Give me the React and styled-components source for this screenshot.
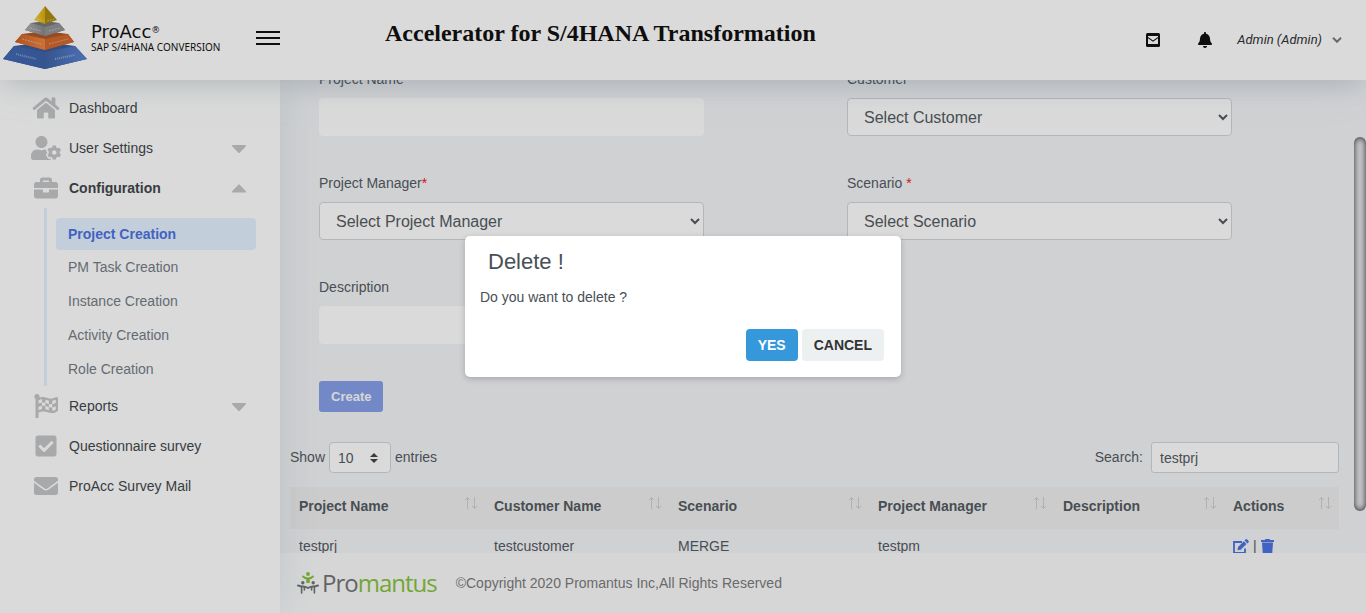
import React, { useLayoutEffect, useRef } from "react";
import styled, { createGlobalStyle, css } from "styled-components";
import {
  FaHome,
  FaUserCog,
  FaBriefcase,
  FaFlagCheckered,
  FaCheckSquare,
  FaEnvelope,
  FaCaretDown,
  FaCaretUp,
  FaBell,
} from "react-icons/fa";

const sans = '"Liberation Sans", Arial, sans-serif';

const GlobalStyle = createGlobalStyle`
  *, *::before, *::after { box-sizing: border-box; }
  body {
    margin: 0;
    font: 14px/21px ${sans};
    color: #495057;
    background: #f3f4f7;
  }
  button, input, select { font-family: inherit; }
`;

const Page = styled.div`
  position: relative;
  display: grid;
  grid-template: 80px minmax(0, 1fr) / 280px minmax(0, 1fr);
  height: 100vh;
  overflow: hidden;
`;

/* ---------- header ---------- */

const Header = styled.header`
  grid-column: 1 / -1;
  position: relative;
  z-index: 3;
  display: flex;
  align-items: center;
  padding-right: 24px;
  background: #fff;
  box-shadow: 0 8px 24px -4px rgba(40, 46, 70, 0.16), 0 0 48px rgba(120, 180, 180, 0.15);
`;

const HeaderStart = styled.div`
  display: flex;
  align-items: center;
  padding-bottom: 4px;
`;

const Brand = styled.a`
  display: flex;
  align-items: center;
  width: 256px;
  padding-left: 2px;
  gap: 3px;
  color: #000;
  text-decoration: none;
`;

const BrandText = styled.span`
  display: grid;
  font: 10px/12px "Noto Sans", sans-serif;
  white-space: nowrap;
`;

const BrandName = styled.span`
  font: 18px/18px "DejaVu Sans", sans-serif;

  sup {
    font-size: 9px;
    line-height: 0;
    vertical-align: 5px;
  }
`;

const MenuButton = styled.button`
  display: grid;
  gap: 4px;
  width: 24px;
  padding: 0;
  border: 0;
  background: none;

  span {
    height: 2px;
    background: #000;
  }
`;

const Title = styled.h1`
  margin: 0 auto 14px 105px;
  font: bold 24px/28px "Liberation Serif", "Times New Roman", serif;
  color: #000;
`;

const HeaderTools = styled.div`
  display: flex;
  align-items: center;
`;

const IconButton = styled.button`
  display: flex;
  margin-right: ${(p) => p.$after || 0}px;
  padding: 0;
  border: 0;
  background: none;
  color: #000;
`;

const UserButton = styled.button`
  display: flex;
  align-items: center;
  gap: 10px;
  padding: 0;
  border: 0;
  background: none;
  font: italic 13px/20px Roboto, sans-serif;
  color: #212529;
`;

/* ---------- sidebar ---------- */

const Sidebar = styled.nav`
  position: relative;
  z-index: 2;
  padding: 8px 24px 0 31px;
  background: #fff;
  box-shadow: 0 0 40px rgba(70, 110, 120, 0.14);
`;

const NavLink = styled.a`
  display: grid;
  grid-template-columns: 30px 1fr 16px;
  align-items: center;
  column-gap: 8px;
  height: 40px;
  padding-right: 9px;
  color: #343a40;
  text-decoration: none;
  font-weight: ${(p) => (p.$open ? "bold" : "normal")};

  svg {
    width: 100%;
    height: 24px;
    color: #c1c2c5;
  }
`;

const SubMenu = styled.ul`
  margin: 0 0 0 13px;
  padding: 10px 0 0 9px;
  list-style: none;
  border-left: 3px solid #e1f2ff;
`;

const SubLink = styled.a`
  display: flex;
  align-items: center;
  height: 34px;
  padding: 0 12px;
  border-radius: 4px;
  color: #6c757d;
  text-decoration: none;
  ${(p) =>
    p.$active &&
    css`
      height: 32px;
      background: #e1f2ff;
      color: #4169e1;
      font-weight: bold;
    `}
`;

/* ---------- main ---------- */

const Main = styled.main`
  display: flex;
  flex-direction: column;
  min-height: 0;
`;

const Scroller = styled.div`
  flex: 1;
  min-height: 0;
  overflow-y: auto;
  scrollbar-width: none;
  padding: 40px 27px 40px 10px;
`;

const Form = styled.form`
  display: grid;
  grid-template-columns: 1fr 1fr;
  gap: 37px 143px;
  margin: 0 107px 30px 29px;
`;

const Field = styled.div`
  display: grid;
  gap: 8px;

  em {
    color: #f00;
    font-style: normal;
  }
`;

const control = css`
  width: 100%;
  height: 38px;
  padding: 6px 12px;
  border-radius: 4px;
  background-color: #fff;
  color: #495057;
  font-size: 16px;
`;

const TextBox = styled.input`
  ${control}
  border: 1px solid #fff;
`;

const Select = styled.select`
  ${control}
  border: 1px solid #ced4da;
`;

const CreateButton = styled.button`
  justify-self: start;
  height: 31px;
  padding: 0 12px;
  border: 0;
  border-radius: 3px;
  background: #4169e1;
  color: #fff;
  font-size: 13px;
  font-weight: bold;
  opacity: 0.65;
`;

const TableBar = styled.div`
  display: flex;
  justify-content: space-between;
  align-items: center;
  margin-bottom: 14px;

  label {
    display: flex;
    align-items: center;
  }
`;

const PageSize = styled.span`
  position: relative;
  display: flex;
  margin: 0 4px;

  select {
    appearance: none;
    width: 62px;
    height: 31px;
    padding: 0 8px;
    border: 1px solid #ced4da;
    border-radius: 4px;
    background: #fff;
    color: #495057;
    font-size: 14px;
  }

  svg {
    position: absolute;
    top: 10px;
    right: 13px;
    pointer-events: none;
  }
`;

const SearchBox = styled.input`
  width: 188px;
  height: 31px;
  margin-left: 8px;
  padding: 0 8px;
  border: 1px solid #ced4da;
  border-radius: 3px;
  background: #fff;
  color: #495057;
  font-size: 14px;
`;

const Table = styled.table`
  width: 100%;
  table-layout: fixed;
  border-collapse: collapse;

  th,
  td {
    padding: 7px 8px 9px 9px;
    text-align: left;
  }

  th {
    height: 41px;
    background: #eee;
    border-bottom: 2px solid #ebedf2;
  }

  td {
    height: 37px;
  }
`;

const HeadCell = styled.div`
  display: flex;
  justify-content: space-between;

  svg {
    flex: none;
  }
`;

const Actions = styled.div`
  display: flex;
  align-items: center;
  gap: 4px;

  a {
    display: flex;
    color: #4169e1;
  }
`;

const Footer = styled.footer`
  display: flex;
  align-items: center;
  flex: none;
  gap: 19px;
  height: 60px;
  padding: 0 17px;
  background: #fafbfc;
  color: #737373;
`;

const Promantus = styled.a`
  display: flex;
  align-items: center;
  gap: 3px;
  color: #6a6c6f;
  text-decoration: none;
  font: 24px/30px "Open Sans", sans-serif;
  letter-spacing: -1px;

  b {
    color: #7fbf2f;
    font-weight: 400;
  }
`;

const ScrollThumb = styled.div`
  position: absolute;
  z-index: 4;
  right: 0;
  top: 137px;
  width: 12px;
  height: 61%;
  border-radius: 6px;
  background: #e9eaec;
  box-shadow: inset 0 0 6px rgba(0, 0, 0, 0.9);
`;

/* ---------- dialog ---------- */

const Backdrop = styled.div`
  position: absolute;
  inset: 0;
  z-index: 5;
  display: flex;
  align-items: center;
  justify-content: center;
  background: rgba(68, 68, 68, 0.2);
`;

const Dialog = styled.section`
  width: 436px;
  max-width: 90%;
  padding: 11px 17px 16px 15px;
  border-radius: 5px;
  background: #fff;
  box-shadow: 0 2px 6px rgba(0, 0, 0, 0.2);

  h2 {
    margin: 0 8px 10px;
    font-size: 22px;
    line-height: 30px;
    font-weight: normal;
  }

  p {
    margin: 0 0 21px;
  }
`;

const DialogButtons = styled.div`
  display: flex;
  justify-content: flex-end;
  gap: 4px;
`;

const DialogButton = styled.button`
  height: 32px;
  padding: 0 12px;
  border: 0;
  border-radius: 4px;
  background: ${(p) => (p.$primary ? "#3498db" : "#ecf0f1")};
  color: ${(p) => (p.$primary ? "#fff" : "#333")};
  font-size: 14px;
  font-weight: bold;
  text-transform: uppercase;
`;

/* ---------- drawings ---------- */

const PyramidLogo = () => (
  <svg width="86" height="64" viewBox="0 0 86 64" aria-hidden="true">
    <defs>
      <linearGradient id="gold"><stop offset="0" stopColor="#f3cb2a" /><stop offset="1" stopColor="#d9a800" /></linearGradient>
      <linearGradient id="grayFace"><stop offset="0" stopColor="#a9a9aa" /><stop offset="1" stopColor="#7f8082" /></linearGradient>
      <linearGradient id="orange"><stop offset="0" stopColor="#c9561a" /><stop offset="1" stopColor="#ee7d36" /></linearGradient>
      <linearGradient id="blue"><stop offset="0" stopColor="#3560b0" /><stop offset="1" stopColor="#3058a3" /></linearGradient>
      <linearGradient id="blueSide"><stop offset="0" stopColor="#34599f" /><stop offset="1" stopColor="#4d7bd0" /></linearGradient>
    </defs>
    <path d="M12 40l31-4 30 4 12 13-42 10L1 53z" fill="#2f5091" />
    <path d="M12 40l31 6v17L1 53z" fill="url(#blue)" />
    <path d="M73 40l-30 6v17l42-10z" fill="url(#blueSide)" />
    <path d="M20 28l23-3 23 3 6 8-29 8-30-8z" fill="#a94d17" />
    <path d="M20 28l23 5v11l-30-8z" fill="url(#orange)" />
    <path d="M66 28l-23 5v11l29-8z" fill="#cf5f20" />
    <path d="M29 17l14-2 14 2 6 7-20 6-20-6z" fill="#6d6e70" />
    <path d="M29 17l14 4v9l-20-6z" fill="url(#grayFace)" />
    <path d="M57 17l-14 4v9l20-6z" fill="#8b8c8e" />
    <path d="M43 0L32 14l11 4z" fill="url(#gold)" />
    <path d="M43 0l12 14-12 4z" fill="#a98300" />
    <path d="M35 13l7 2M45 15l7-2M28 22l11 3M47 25l11-3M20 33l19 5M47 38l19-5" stroke="#fff" strokeOpacity=".4" strokeDasharray="2 1" />
    <path d="M14 48l20 5M53 53l20-4" stroke="#fff" strokeOpacity=".4" strokeWidth="2" strokeDasharray="1 1" />
  </svg>
);

const MailBox = () => (
  <svg width="14" height="14" viewBox="0 0 14 14" aria-hidden="true">
    <rect width="14" height="14" rx="1.5" fill="#000" />
    <path d="M2 3h10v1L7 7.6 2 4z" fill="#fff" />
    <path d="M2 5.2l5 3.6 5-3.6V11H2z" fill="#fff" />
  </svg>
);

const Chevron = () => (
  <svg width="10" height="6" viewBox="0 0 10 6" fill="none" stroke="#6c757d" strokeWidth="2" aria-hidden="true">
    <path d="M1 .8l4 4 4-4" />
  </svg>
);

const UpDown = () => (
  <svg width="8" height="12" viewBox="0 0 8 12" fill="#343a40" aria-hidden="true">
    <path d="M4 1l4 4H0zM4 11L0 7h8z" />
  </svg>
);

const SortArrows = () => (
  <svg width="13" height="14" viewBox="0 0 13 14" fill="none" stroke="#cbccce" aria-hidden="true">
    <path d="M3.5 13V1.5M1 4l2.5-2.5L6 4M10.5 1v11.5M8 10l2.5 2.5L13 10" />
  </svg>
);

const Edit = () => (
  <svg width="16" height="15" viewBox="0 0 16 15" fill="none" aria-hidden="true">
    <path d="M9 3H1v11h11V9.500" stroke="currentColor" strokeWidth="1.800" />
    <path d="M4.500 11.200l.5-3.200 5.800-5.800 2.700 2.700L7.700 10.700zM11.500 1.500l1-1a1.200 1.200 0 0 1 1.700 0l1.200 1.200a1.200 1.200 0 0 1 0 1.700l-1 1z" fill="currentColor" />
  </svg>
);

const Trash = () => (
  <svg width="13" height="15" viewBox="0 0 13 15" fill="currentColor" aria-hidden="true">
    <path d="M4.500 0h4l.8 1H13v2H0V1h3.700zM1 3.400h11l-.7 10.200a1.500 1.500 0 0 1-1.500 1.400H3.200a1.500 1.500 0 0 1-1.500-1.400z" />
  </svg>
);

const People = () => (
  <svg width="22" height="22" viewBox="0 0 22 22" fill="none" strokeLinecap="round" aria-hidden="true">
    <g stroke="#7fbf2f">
      <path d="M6 4.500q2 2 5 2t5-2" strokeWidth="1.800" />
      <path d="M11 7v4" strokeWidth="3.500" strokeLinecap="butt" />
      <circle cx="11" cy="2" r="1.900" fill="#7fbf2f" stroke="none" />
    </g>
    <g stroke="#6a6c6f">
      <path d="M1 13.500q2.500 1 5 1t5 1.500q2.500-1.500 5-1.500t5-1" strokeWidth="2" />
      <path d="M4.600 15v6M7.400 15v3M14.600 15v3M17.400 15v6" strokeWidth="1.600" />
      <circle cx="5.800" cy="10.800" r="1.700" fill="#6a6c6f" stroke="none" />
      <circle cx="16.200" cy="10.800" r="1.700" fill="#6a6c6f" stroke="none" />
    </g>
  </svg>
);

const columns = [
  ["Project Name", 195],
  ["Customer Name", 184],
  ["Scenario", 200],
  ["Project Manager", 185],
  ["Description", 170],
  ["Actions", 115],
];
const totalWidth = columns.reduce((sum, c) => sum + c[1], 0);

export default function App() {
  const scroller = useRef(null);

  useLayoutEffect(() => {
    scroller.current.scrollTop = 51;
  }, []);

  return (
    <>
      <GlobalStyle />
      <Page>
        <Header>
          <HeaderStart>
            <Brand href="#">
              <PyramidLogo />
              <BrandText>
                <BrandName>ProAcc<sup>®</sup></BrandName>
                SAP S/4HANA CONVERSION
              </BrandText>
            </Brand>
            <MenuButton type="button" aria-label="Toggle menu"><span /><span /><span /></MenuButton>
          </HeaderStart>
          <Title>Accelerator for S/4HANA Transformation</Title>
          <HeaderTools>
            <IconButton type="button" aria-label="Messages" $after={37}><MailBox /></IconButton>
            <IconButton type="button" aria-label="Notifications" $after={24}><FaBell size={16} /></IconButton>
            <UserButton type="button">Admin (Admin) <Chevron /></UserButton>
          </HeaderTools>
        </Header>

        <Sidebar>
          <NavLink href="#"><FaHome />Dashboard</NavLink>
          <NavLink href="#"><FaUserCog />User Settings<FaCaretDown /></NavLink>
          <NavLink href="#" $open><FaBriefcase />Configuration<FaCaretUp /></NavLink>
          <SubMenu>
            <li><SubLink href="#" $active>Project Creation</SubLink></li>
            <li><SubLink href="#">PM Task Creation</SubLink></li>
            <li><SubLink href="#">Instance Creation</SubLink></li>
            <li><SubLink href="#">Activity Creation</SubLink></li>
            <li><SubLink href="#">Role Creation</SubLink></li>
          </SubMenu>
          <NavLink href="#"><FaFlagCheckered />Reports<FaCaretDown /></NavLink>
          <NavLink href="#"><FaCheckSquare />Questionnaire survey</NavLink>
          <NavLink href="#"><FaEnvelope />ProAcc Survey Mail</NavLink>
        </Sidebar>

        <Main>
          <Scroller ref={scroller}>
            <Form onSubmit={(e) => e.preventDefault()}>
              <Field>
                <label htmlFor="project">Project Name</label>
                <TextBox id="project" />
              </Field>
              <Field>
                <label htmlFor="customer">Customer</label>
                <Select id="customer"><option>Select Customer</option></Select>
              </Field>
              <Field>
                <label htmlFor="manager">Project Manager<em>*</em></label>
                <Select id="manager"><option>Select Project Manager</option></Select>
              </Field>
              <Field>
                <label htmlFor="scenario">Scenario <em>*</em></label>
                <Select id="scenario"><option>Select Scenario</option></Select>
              </Field>
              <Field>
                <label htmlFor="description">Description</label>
                <TextBox id="description" />
              </Field>
              <span />
              <CreateButton type="submit" disabled>Create</CreateButton>
            </Form>

            <TableBar>
              <label>
                Show
                <PageSize>
                  <select><option>10</option></select>
                  <UpDown />
                </PageSize>
                entries
              </label>
              <label>
                Search:
                <SearchBox defaultValue="testprj" />
              </label>
            </TableBar>

            <Table>
              <colgroup>
                {columns.map(([name, width]) => (
                  <col key={name} style={{ width: `${(width / totalWidth) * 100}%` }} />
                ))}
              </colgroup>
              <thead>
                <tr>
                  {columns.map(([name]) => (
                    <th key={name}><HeadCell>{name}<SortArrows /></HeadCell></th>
                  ))}
                </tr>
              </thead>
              <tbody>
                <tr>
                  <td>testprj</td>
                  <td>testcustomer</td>
                  <td>MERGE</td>
                  <td>testpm</td>
                  <td />
                  <td>
                    <Actions>
                      <a href="#" aria-label="Edit"><Edit /></a>|
                      <a href="#" aria-label="Delete"><Trash /></a>
                    </Actions>
                  </td>
                </tr>
              </tbody>
            </Table>
          </Scroller>
          <Footer>
            <Promantus href="#"><People /><span>Pro<b>mantus</b></span></Promantus>
            <span>©Copyright 2020 Promantus Inc,All Rights Reserved</span>
          </Footer>
        </Main>

        <ScrollThumb />

        <Backdrop>
          <Dialog role="dialog" aria-modal="true" aria-labelledby="dialog-title">
            <h2 id="dialog-title">Delete !</h2>
            <p>Do you want to delete ?</p>
            <DialogButtons>
              <DialogButton type="button" $primary>Yes</DialogButton>
              <DialogButton type="button">Cancel</DialogButton>
            </DialogButtons>
          </Dialog>
        </Backdrop>
      </Page>
    </>
  );
}
